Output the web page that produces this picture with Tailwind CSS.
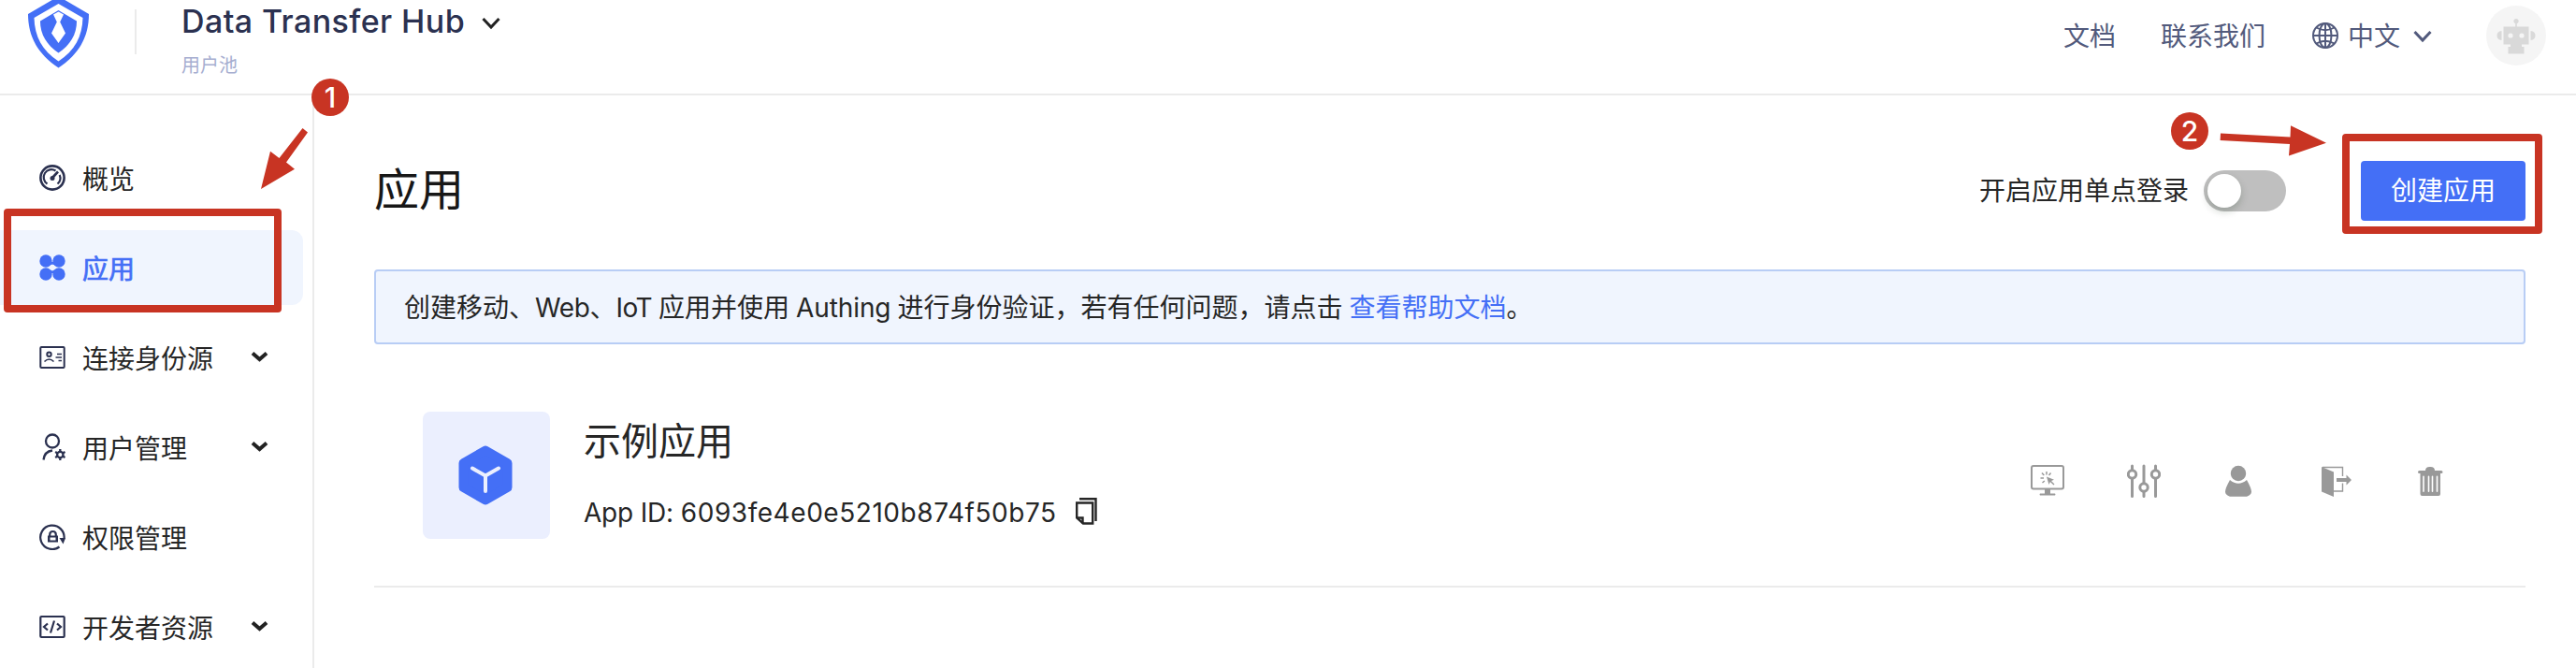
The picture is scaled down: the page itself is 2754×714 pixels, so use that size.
<!DOCTYPE html>
<html lang="zh-CN">
<head>
<meta charset="utf-8">
<title>Data Transfer Hub</title>
<script src="https://cdn.jsdelivr.net/npm/@tailwindcss/browser@4"></script>
</head>
<body class="relative w-[2754px] h-[714px] overflow-hidden bg-white font-['Inter','Noto_Sans_CJK_SC',sans-serif] text-[28px] leading-none text-[#262626]">

<header class="flex h-[102px] items-start border-b-2 border-[#ebebeb]">
  <svg class="ml-[30px] w-[65px] h-[73px] shrink-0" viewBox="30 0 65 73">
    <path fill="#446ff6" d="M62.5-4 95 15C95 40 84 58 62.5 72.500C41 58 30 40 30 15Z"/>
    <path fill="#fff" d="M62.500 4 88.500 19C88 39 80 54 62.500 65.500C45 54 37 39 36.500 19Z"/>
    <path fill="#446ff6" d="M62.500 11 82 22.500C82 37 75 48 62.500 56.500C50 48 43 37 43 22.500Z"/>
    <path fill="#fff" d="M57 15.500 62.500 12.500 68 15.500 64.200 23.500 70 35.500 62.500 46 55 35.500 60.800 23.500Z"/>
  </svg>
  <div class="ml-[49px] mt-[10px] h-12 w-[2px] bg-[#ebebeb]"></div>
  <div class="ml-12 flex flex-col">
    <div class="mt-[3px] flex h-10 items-center gap-[18px]">
      <span class="whitespace-nowrap text-[34px] font-medium tracking-[0.4px] text-[#2b3150]">Data Transfer Hub</span>
      <svg class="mt-[3px] w-[20px] h-[14px]" viewBox="0 0 20 14" fill="none" stroke="#222" stroke-width="3"><path d="M1.500 2 10 11 18.500 2"/></svg>
    </div>
    <span class="mt-[17px] text-[20px] text-[#a6aed0]">用户池</span>
  </div>
  <nav class="ml-auto mr-8 mt-[6px] flex h-16 items-center text-[#525a7c]">
    <span class="pt-[2px]">文档</span>
    <span class="ml-12 pt-[2px]">联系我们</span>
    <svg class="ml-[50px] w-7 h-7" viewBox="0 0 28 28" fill="none" stroke="currentColor" stroke-width="2"><circle cx="14" cy="14" r="13"/><ellipse cx="14" cy="14" rx="6.500" ry="13"/><path d="M14 1v26M1 14h26M4.500 5.500Q14 11 23.500 5.500M4.500 22.500Q14 17 23.500 22.500"/></svg>
    <span class="ml-[10px] pt-[2px]">中文</span>
    <svg class="ml-[14px] mt-[2px] w-5 h-[14px]" viewBox="0 0 20 14" fill="none" stroke="currentColor" stroke-width="3"><path d="M1.500 2 10 11 18.500 2"/></svg>
    <svg class="ml-[58px] w-16 h-16" viewBox="0 0 64 64"><circle cx="32" cy="32" r="32" fill="#f5f5f5"/><g fill="#d9d9d9"><circle cx="32" cy="16.500" r="2.600"/><path d="M31.200 17h1.600v6h-1.600zM18.500 22.500h27v19h-7.500v2.500h2.500v7.500h-17V44H26v-2.500h-7.500zM16.500 27v10q-5-.5-5-5t5-5M47.500 27v10q5-.5 5-5t-5-5"/></g><circle cx="26" cy="32" r="2.600" fill="#f5f5f5"/><circle cx="38" cy="32" r="2.600" fill="#f5f5f5"/></svg>
  </nav>
</header>

<div class="flex h-[612px]">
  <aside class="flex w-[336px] shrink-0 flex-col gap-4 border-r-2 border-[#ebebeb] pr-[10px] pt-12">
    <a class="flex h-20 shrink-0 items-center pl-[42px]">
      <svg class="w-7 h-7" viewBox="0 0 28 28" fill="none" stroke="#2b3150"><circle cx="14" cy="14" r="12.600" stroke-width="2.600"/><path stroke-width="2.200" d="M8.500 20.500A8.300 8.300 0 0 1 17.500 6.500M21.700 11A8.300 8.300 0 0 1 19.500 20.500"/><path stroke-width="2.600" d="M14 14 20 7.500"/><circle cx="14" cy="14.500" r="2.500" fill="#2b3150" stroke="none"/></svg>
      <span class="ml-[18px] pt-[4px]">概览</span>
    </a>
    <a class="flex h-20 shrink-0 items-center rounded-r-xl bg-[#f0f5fe] pl-[42px] text-[#446ff6]">
      <svg class="w-7 h-7" viewBox="0 0 28 28" fill="currentColor"><path d="M10 8h8v3h-8zM10 17h8v3h-8z"/><circle cx="7" cy="7" r="6.700"/><circle cx="21" cy="7" r="6.700"/><circle cx="7" cy="21" r="6.700"/><circle cx="21" cy="21" r="6.700"/><path fill="#f0f5fe" d="M14 9.500Q14.500 13.500 18.500 14 14.500 14.500 14 18.500 13.500 14.500 9.500 14 13.500 13.500 14 9.500"/></svg>
      <span class="ml-[18px] pt-[4px] [-webkit-text-stroke:0.7px_#446ff6]">应用</span>
    </a>
    <a class="flex h-20 shrink-0 items-center pl-[42px]">
      <svg class="w-7 h-7" viewBox="0 0 28 28" fill="none" stroke="#2b3150" stroke-width="2"><rect x="1.300" y="3" width="25.400" height="22" rx="1"/><circle cx="10.500" cy="10.700" r="2.200"/><path d="M5.500 18.500Q10.500 13.500 15.500 18.500M19 10.500h5M17.500 14h6.500M20.500 17.500h3.500" stroke-width="1.600"/></svg>
      <span class="ml-[18px] pt-[4px]">连接身份源</span>
      <svg class="ml-auto mr-[37px] -mt-[2px] w-[19px] h-[12px]" viewBox="0 0 19 12" fill="none" stroke="#222" stroke-width="4"><path d="M2 2.500 9.500 9 17 2.500"/></svg>
    </a>
    <a class="flex h-20 shrink-0 items-center pl-[42px]">
      <svg class="w-7 h-[30px]" viewBox="0 0 28 30" fill="none" stroke="#2b3150" stroke-width="2.300"><circle cx="14" cy="8.500" r="7"/><path d="M4.500 28.500Q5.500 19.500 14 18.500"/><circle cx="22.300" cy="23" r="3.200"/><path d="M22.300 20v-3M22.300 26v3M19.700 21.500l-2.600-1.500M24.900 24.500l2.600 1.500M19.700 24.500 17.100 26M24.900 21.500l2.600-1.500"/></svg>
      <span class="ml-[18px] pt-[4px]">用户管理</span>
      <svg class="ml-auto mr-[37px] -mt-[2px] w-[19px] h-[12px]" viewBox="0 0 19 12" fill="none" stroke="#222" stroke-width="4"><path d="M2 2.500 9.500 9 17 2.500"/></svg>
    </a>
    <a class="flex h-20 shrink-0 items-center pl-[42px]">
      <svg class="w-7 h-7" viewBox="0 0 28 28" fill="none" stroke="#2b3150" stroke-width="2.200"><path d="M26.500 16A12.700 12.700 0 1 0 21.500 24.500"/><path fill="#2b3150" stroke="none" d="M21.500 15h6.500l-2.500 6.500z"/><path fill="#2b3150" fill-rule="evenodd" stroke="none" d="M9 12.500h11v7H9zm2.500 2v3h6v-3z"/><path d="M11.200 13V11.500q0-3.500 3.300-3.500t3.300 3.500V13"/></svg>
      <span class="ml-[18px] pt-[4px]">权限管理</span>
    </a>
    <a class="flex h-20 shrink-0 items-center pl-[42px]">
      <svg class="w-7 h-7" viewBox="0 0 28 28" fill="none" stroke="#2b3150" stroke-width="2.200"><rect x="1.300" y="3" width="25.400" height="22" rx="1"/><path d="M9 10.500 5 14l4 3.500M19 10.500l4 3.500-4 3.500M16 7.500l-4 13"/></svg>
      <span class="ml-[18px] pt-[4px]">开发者资源</span>
      <svg class="ml-auto mr-[37px] -mt-[2px] w-[19px] h-[12px]" viewBox="0 0 19 12" fill="none" stroke="#222" stroke-width="4"><path d="M2 2.500 9.500 9 17 2.500"/></svg>
    </a>
  </aside>

  <main class="ml-16 mr-[54px] flex grow flex-col">
    <div class="mt-[70px] flex h-16 items-center">
      <h1 class="pb-[3px] text-[48px] leading-none text-[#171717]">应用</h1>
      <span class="ml-auto">开启应用单点登录</span>
      <div class="ml-4 flex h-11 w-[88px] items-center rounded-full bg-[#bfbfbf] pl-1"><div class="size-9 rounded-full bg-white shadow-[0_4px_8px_rgba(0,35,11,0.2)]"></div></div>
      <button class="ml-20 h-16 w-44 rounded bg-[#446ff6] leading-none text-white">创建应用</button>
    </div>
    <div class="mt-[52px] flex h-20 items-center rounded border-2 border-[#b8cdf5] bg-[#f0f5fe] pl-[30px]">
      <p class="whitespace-nowrap pt-px [word-spacing:-0.8px]">创建移动、<span class="tracking-[-0.4px]">Web</span>、<span class="tracking-[-0.6px]">IoT</span> 应用并使用 <span class="tracking-[-0.1px]">Authing</span> 进行身份验证，若有任何问题，请点击 <a class="text-[#446ff6]">查看帮助文档</a>。</p>
    </div>
    <section class="flex h-[260px] items-start border-b-2 border-[#ebebeb] pl-[52px] pt-[72px]">
      <div class="flex size-[136px] items-center justify-center rounded-lg bg-[#ebeffe] pr-[2px]">
        <svg class="w-[58px] h-[64px]" viewBox="0 0 58 64"><path fill="#446ff6" stroke="#446ff6" stroke-width="10" stroke-linejoin="round" d="M29 5.500 52.500 19v26L29 58.500 5.500 45V19z"/><path fill="none" stroke="#ebeffe" stroke-width="4" stroke-linecap="round" stroke-linejoin="round" d="M15 24.500 29 32.500 43 24.500M29 32.500V49"/></svg>
      </div>
      <div class="ml-9 flex flex-col">
        <h2 class="mt-[12px] text-[40px] leading-[40px]">示例应用</h2>
        <div class="mt-[40px] flex h-8 items-center">
          <span class="whitespace-nowrap"><span class="tracking-[-0.2px]">App ID:</span> <span class="tracking-[0.55px]">6093fe4e0e5210b874f50b75</span></span>
          <svg class="-mt-[4px] ml-[20px] w-[23px] h-[29px]" viewBox="0 0 23 29" fill="none" stroke="#262626" stroke-width="2.400"><path d="M4 1.200h17.500V25M1.200 5.500h17v22H8L1.200 21.500z"/><path d="M1.200 21.500H7.500v6"/></svg>
        </div>
      </div>
      <div class="ml-auto mr-[83px] mt-[56px] flex gap-[66.5px]">
        <svg class="size-9" viewBox="0 0 36 36" fill="none" stroke="#999" stroke-width="2"><rect x="1" y="2" width="34" height="24.500" rx="2"/><path fill="#999" stroke="none" d="M15 27h6v4.500h5q1 1 0 2H10q-1-1 0-2h5zM17 13.500l8 3.200-3 1.200 3.500 3.700-1 1-3.600-3.600L19.500 22z"/><path stroke-width="1.500" d="M17 8v3.500M12 9.500l2.300 2.500M21.500 9.500 19.500 12M10.500 15h3.500M12.500 20l2.300-2"/></svg>
        <svg class="size-9" viewBox="0 0 36 36" fill="none" stroke="#999" stroke-width="3" stroke-linecap="round"><path d="M5.500 2v4M5.500 16v18.500M18 2v18M18 30v4.500M30.500 2v4M30.500 16v18.500"/><circle cx="5.500" cy="11" r="4.200"/><circle cx="18" cy="25" r="4.200"/><circle cx="30.500" cy="11" r="4.200"/></svg>
        <svg class="size-9" viewBox="0 0 36 36" fill="#999"><circle cx="17" cy="10" r="8.200"/><path d="M8 17q9 7.500 18 0Q31 26 31 29.500T26 34.700H8Q3 33 3 29.500T8 17"/></svg>
        <svg class="size-9" viewBox="0 0 36 36" fill="#999"><path d="M3 3l13 5.500V35L3 29.500z"/><path fill="none" stroke="#999" stroke-width="1.400" d="M4 3.500h21.500V13M25.500 20.500V29H16"/><path d="M19 15h10.500v-3.500L35 17l-5.500 5.500V19H19z"/></svg>
        <svg class="size-9" viewBox="0 0 36 36" fill="#999"><path fill-rule="evenodd" d="M12 7q0-4 4.500-4h1Q22 3 22 7h7q1.500 0 1.500 1.500T29 10h-1v22q0 2-2 2H8.500q-2 0-2-2V10h-1Q4 10 4 8.500T5.500 7zM9.200 13.500q0-1 .8-1t.8 1V29q0 1-.8 1t-.8-1zM14.700 13.500q0-1 .8-1t.8 1V29q0 1-.8 1t-.8-1zM18.700 13.500q0-1 .8-1t.8 1V29q0 1-.8 1t-.8-1zM23.700 13.500q0-1 .8-1t.8 1V29q0 1-.8 1t-.8-1z"/></svg>
      </div>
    </section>
  </main>
</div>

<!-- step annotations laid over the page -->
<div class="absolute left-[4px] top-[223px] h-[111px] w-[297px] rounded border-8 border-[#c83423]"></div>
<div class="absolute left-[2504px] top-[143px] h-[107px] w-[214px] rounded border-8 border-[#c83423]"></div>
<svg class="absolute left-0 top-0 h-[714px] w-[2754px]" viewBox="0 0 2754 714" fill="#c83423"><path d="M323.500 137 329 141.500 306 173.500 315 180.700 279 202 289 161.700 298.500 169z"/><path d="M2374 142.500 2448.500 146.500 2449 134.300 2487 152.700 2447 166.500 2448 154 2373.600 150z"/></svg>
<div class="absolute left-[333px] top-[84px] flex size-10 items-center justify-center rounded-full bg-[#c83423] text-[30px] font-medium text-white">1</div>
<div class="absolute left-[2321px] top-[120px] flex size-10 items-center justify-center rounded-full bg-[#c83423] text-[30px] font-medium text-white">2</div>
</body>
</html>
